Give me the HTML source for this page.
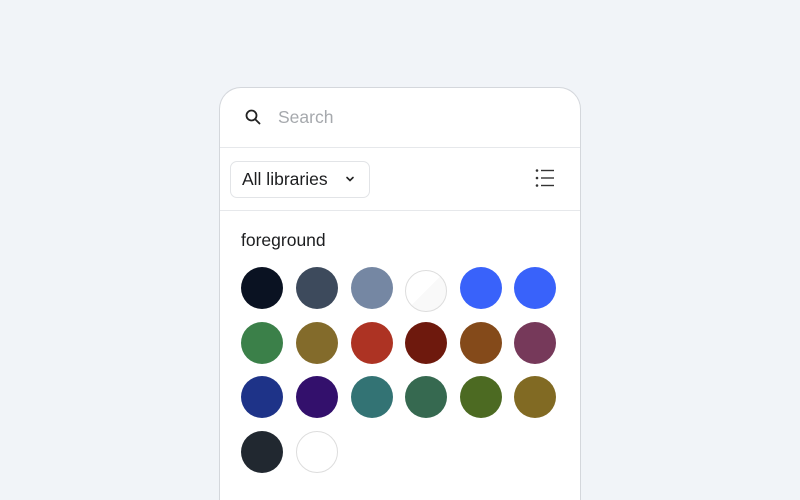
<!DOCTYPE html>
<html style="overflow:hidden"><head><style>
html,body{margin:0;height:500px;overflow:hidden}
body{width:800px;background:#f1f4f8;font-family:"Liberation Sans",sans-serif;position:relative}
.wrap{position:absolute;left:0;top:0;width:800px;height:500px;overflow:hidden}
.panel{position:absolute;left:219px;top:87px;width:360px;height:413px;background:#fff;border:1px solid #d4d7dc;border-bottom:none;border-radius:22px 22px 0 0;box-sizing:content-box}
.div{position:absolute;left:0;right:0;height:1px;background:#e6e8eb}
.c{position:absolute;width:42px;height:42px;border-radius:50%}
</style></head><body><div class="wrap">
<div class="panel">
<svg style="position:absolute;left:24px;top:20px" width="18" height="18" viewBox="0 0 18 18"><circle cx="7.5" cy="7.5" r="5" fill="none" stroke="#222" stroke-width="1.8"/><line x1="11.2" y1="11.2" x2="15.5" y2="15.5" stroke="#222" stroke-width="1.8" stroke-linecap="round"/></svg>
<div style="position:absolute;left:58px;top:19px;font-size:17.5px;color:#a6a9ad">Search</div>
<div class="div" style="top:59px"></div>
<div style="position:absolute;left:10px;top:73px;width:138px;height:35px;border:1px solid #e2e4e7;border-radius:7px"></div>
<div style="position:absolute;left:22px;top:81px;font-size:17.5px;color:#1c1d1f">All libraries</div>
<svg style="position:absolute;left:125px;top:88px" width="10" height="6" viewBox="0 0 10 6"><path d="M2 1.5L5 4.5L8 1.5" fill="none" stroke="#222" stroke-width="1.6" stroke-linecap="round"/></svg>
<svg style="position:absolute;left:315px;top:80px" width="20" height="20" viewBox="0 0 20 20" fill="#333"><circle cx="2" cy="2.5" r="1.3"/><circle cx="2" cy="10" r="1.3"/><circle cx="2" cy="17.5" r="1.3"/><rect x="6" y="1.8" width="13" height="1.4"/><rect x="6" y="9.3" width="13" height="1.4"/><rect x="6" y="16.8" width="13" height="1.4"/></svg>
<div class="div" style="top:122px"></div>
<div style="position:absolute;left:21px;top:142px;font-size:17.5px;color:#1c1d1f">foreground</div>
</div>
<div class="c" style="left:241px;top:267px;background:#0a1222"></div>
<div class="c" style="left:296px;top:267px;background:#3d4a5c"></div>
<div class="c" style="left:351px;top:267px;background:#7587a3"></div>
<div class="c" style="left:405px;top:270px;width:40px;height:40px;border:1px solid #ddd;background:linear-gradient(135deg,#fff 50%,#f9f9f9 50%)"></div>
<div class="c" style="left:460px;top:267px;background:#3962fa"></div>
<div class="c" style="left:514px;top:267px;background:#3962fa"></div>
<div class="c" style="left:241px;top:322px;background:#3b8049"></div>
<div class="c" style="left:296px;top:322px;background:#836b2b"></div>
<div class="c" style="left:351px;top:322px;background:#ad3323"></div>
<div class="c" style="left:405px;top:322px;background:#6e190d"></div>
<div class="c" style="left:460px;top:322px;background:#844a1a"></div>
<div class="c" style="left:514px;top:322px;background:#76395a"></div>
<div class="c" style="left:241px;top:376px;background:#1e3388"></div>
<div class="c" style="left:296px;top:376px;background:#33106c"></div>
<div class="c" style="left:351px;top:376px;background:#337374"></div>
<div class="c" style="left:405px;top:376px;background:#366950"></div>
<div class="c" style="left:460px;top:376px;background:#4c6a22"></div>
<div class="c" style="left:514px;top:376px;background:#816a23"></div>
<div class="c" style="left:241px;top:431px;background:#212830"></div>
<div class="c" style="left:296px;top:431px;width:40px;height:40px;border:1px solid #ddd;background:#fff"></div>
</div></body></html>
